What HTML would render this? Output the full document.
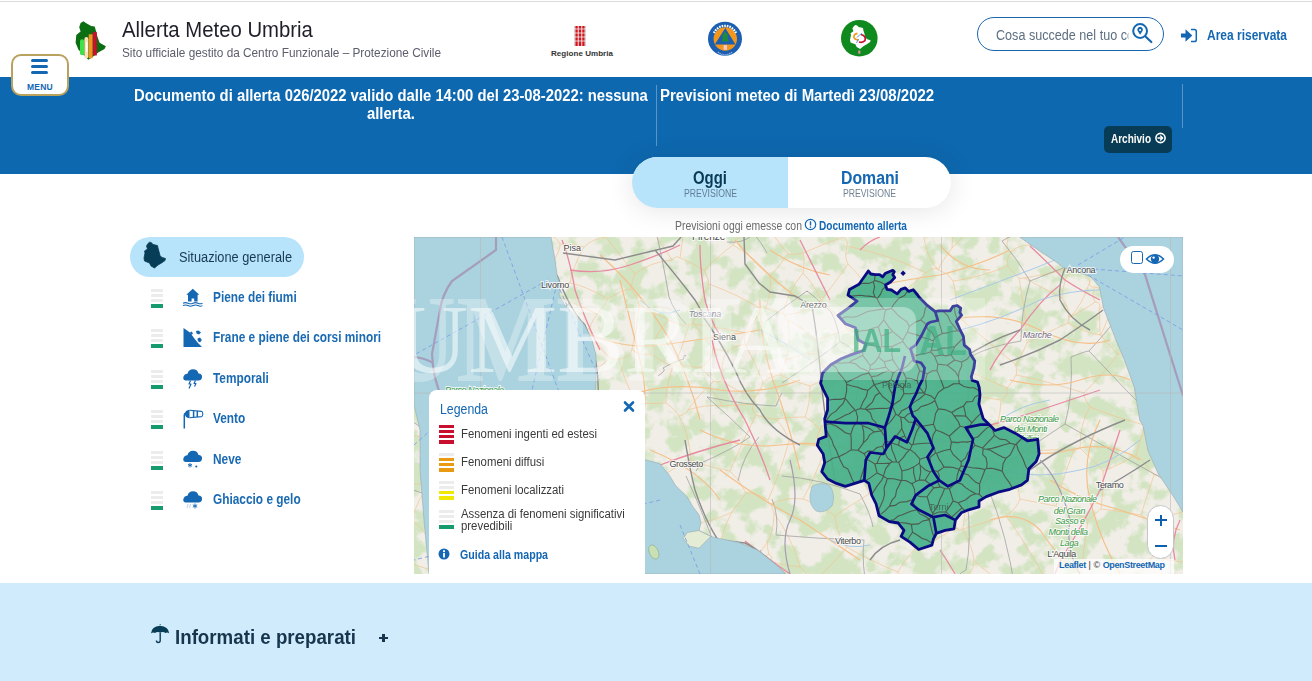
<!DOCTYPE html>
<html><head><meta charset="utf-8">
<style>
*{margin:0;padding:0;box-sizing:border-box}
html,body{width:1312px;height:681px;overflow:hidden;background:#fff;font-family:"Liberation Sans",sans-serif}
.a{position:absolute;white-space:nowrap;line-height:1}
#topline{position:absolute;left:0;top:1px;width:1312px;height:1px;background:#dadcda}
#band{position:absolute;left:0;top:77px;width:1312px;height:97px;background:#0e68af}
#bottom{position:absolute;left:0;top:583px;width:1312px;height:98px;background:#d0ecfc}
.bt{color:#fff;font-weight:700;font-size:16px;transform:scaleX(0.926);transform-origin:0 0}
.lvl{position:absolute;left:151px;width:12px}
.lvl i{display:block;height:3px;margin-bottom:2px;background:#ececec}
.lvl i.g{background:#169b6f;height:4px}
.side{position:absolute;left:213px;font-size:14px;font-weight:700;color:#1a6ab3;transform:scaleX(0.847);transform-origin:0 0;white-space:nowrap;line-height:1}
.ico{position:absolute;left:182px}
</style></head><body>
<div id="topline"></div>
<div id="band"></div>
<div id="bottom"></div>

<!-- ================= HEADER ================= -->
<div class="a" id="title" style="left:122px;top:19px;font-size:22px;transform:scaleX(0.924);transform-origin:0 0;color:#1f1f2a">Allerta Meteo Umbria</div>
<div class="a" id="subtitle" style="left:122px;top:46px;font-size:13px;transform:scaleX(0.907);transform-origin:0 0;color:#5d5d6d">Sito ufficiale gestito da Centro Funzionale – Protezione Civile</div>


<!-- logo -->
<svg class="a" style="left:70px;top:16px" width="42" height="48" viewBox="70 16 42 48">
<path d="M83.4 21.3 L85.5 22.7 L91.1 25.9 L94.7 26.6 L96.1 31.5 L97.5 37.1 L99.6 42.8 L105.9 46.3 L104.5 49.1 L98.2 52.6 L92.6 56.9 L88.3 59.7 L84.1 55.5 L78.5 49.8 L75.6 42.8 L76.3 35 L80.6 31.5 L79.2 27.3 L80.6 23 Z" fill="#0b6e12"/>
<rect x="80" y="39.3" width="4.2" height="16" rx="2" fill="#3fe04a"/>
<rect x="84.4" y="37.1" width="4" height="21.5" rx="2" fill="#fbe3b8"/>
<rect x="86" y="42" width="1.6" height="10" rx="0.8" fill="#fffdf4"/>
<rect x="88.7" y="34.3" width="3.9" height="24" fill="#f0961e"/>
<rect x="92.9" y="31.9" width="3.9" height="23.6" fill="#c8102e"/>
</svg>
<!-- menu button -->
<div class="a" style="left:11px;top:54px;width:58px;height:42px;border:2px solid #b9a15e;border-radius:10px;background:#fff"></div>
<div class="a" style="left:31px;top:59px;width:17px;height:3px;border-radius:1.5px;background:#1467b3"></div>
<div class="a" style="left:31px;top:65px;width:17px;height:3px;border-radius:1.5px;background:#1467b3"></div>
<div class="a" style="left:31px;top:71px;width:17px;height:3px;border-radius:1.5px;background:#1467b3"></div>
<div class="a" style="left:27px;top:83px;font-size:8.5px;font-weight:700;color:#1467b3;letter-spacing:0.2px">MENU</div>

<!-- regione umbria -->
<svg class="a" style="left:572px;top:25px" width="16" height="22" viewBox="0 0 16 22">
<rect x="2" y="1" width="12" height="20" fill="#cfcfcf"/>
<rect x="3.5" y="1" width="2.2" height="20" fill="#e0101a"/>
<rect x="6.9" y="1" width="2.2" height="20" fill="#e0101a"/>
<rect x="10.3" y="1" width="2.2" height="20" fill="#e0101a"/>
<path d="M2 4h12M2 8h12M2 12h12M2 16h12" stroke="#f2f2f2" stroke-width="0.8"/>
</svg>
<div class="a" style="left:551px;top:50px;font-size:8px;font-weight:700;color:#333;letter-spacing:0.05px">Regione Umbria</div>

<!-- protezione civile -->
<svg class="a" style="left:706px;top:20px" width="38" height="38" viewBox="706 20 38 38">
<circle cx="725" cy="38.8" r="17" fill="#1c5fb0"/>
<circle cx="725.3" cy="39" r="11.7" fill="#f2971c"/>
<path d="M725.3 27.9 L735.5 44.5 L714.8 44.5 Z" fill="#1c5fb0"/>
<path d="M725 31.5 L728 35 L727.5 38 L729 41.5 L721.5 41.5 L722.8 38 L722.3 35 Z" fill="#1f8a3a"/>
<rect x="723.6" y="45.1" width="3.4" height="4.7" fill="#f0c8d0"/>
<path d="M714 33 A12 12 0 0 1 736 33" fill="none" stroke="#fff" stroke-width="2.2" stroke-dasharray="1.6 1"/>
<path d="M718 52 A10 10 0 0 0 732 52" fill="none" stroke="#9ec0ea" stroke-width="1.4" stroke-dasharray="1.2 0.8"/>
</svg>

<!-- green circle -->
<svg class="a" style="left:839px;top:18px" width="40" height="40" viewBox="839 18 40 40">
<circle cx="859.3" cy="38.2" r="18.3" fill="#0f8a1f"/>
<path d="M855.3 25.0 L857.2 25.5 L858.6 27.1 L863.0 28.1 L863.4 30.4 L864.4 33.6 L865.4 37.4 L867.3 39.2 L870.6 40.2 L870.2 42.0 L866.8 44.3 L863.4 46.2 L860.1 49.0 L856.7 47.1 L855.3 44.3 L850.5 42.5 L850.0 39.7 L851.0 35.0 L850.5 33.2 L853.4 31.3 L852.4 28.5 L853.8 26.2 Z" fill="#fff"/>
<path d="M857.5 33.5 Q853.5 34 854 37.5 Q855 40 858.5 40" fill="none" stroke="#f39a1a" stroke-width="1.8"/>
<path d="M861 34.5 Q866.5 36 865 40.5 Q863 43 859 42" fill="none" stroke="#c8102e" stroke-width="1.8"/>
<path d="M857 37.5 Q860 34 862 33.5 M858.5 39 Q857 42 856.5 43" fill="none" stroke="#3a8ad8" stroke-width="0.9"/>
<rect x="858.2" y="50.5" width="2.2" height="3.2" fill="#e090a0"/>
</svg>

<!-- search -->
<div class="a" style="left:977px;top:17px;width:187px;height:34px;border:1.3px solid #1a67b0;border-radius:17px;background:#fff"></div>
<div class="a" style="left:996px;top:28px;width:147px;overflow:hidden;font-size:14px;color:#5d6f80;transform:scaleX(0.9);transform-origin:0 0">Cosa succede nel tuo comune</div>
<svg class="a" style="left:1128px;top:20px" width="28" height="26" viewBox="1128 20 28 26">
<circle cx="1140.1" cy="31" r="6.9" fill="none" stroke="#1467b3" stroke-width="2"/>
<path d="M1145.5 36.5 L1151.3 42" stroke="#1467b3" stroke-width="2.2" stroke-linecap="round"/>
<path d="M1140.1 34.8 L1137.7 31 A2.8 2.8 0 1 1 1142.5 31 Z" fill="#1467b3"/>
<circle cx="1140.1" cy="30" r="1" fill="#fff"/>
</svg>

<!-- area riservata -->
<svg class="a" style="left:1178px;top:26px" width="22" height="18" viewBox="1178 26 22 18">
<path d="M1181 35.5 L1186.5 35.5" stroke="#1467b3" stroke-width="4"/>
<path d="M1185.5 29.2 L1192.3 35.5 L1185.5 41.8 Z" fill="#1467b3"/>
<path d="M1191 29.6 L1194.5 29.6 Q1196.3 29.6 1196.3 31.4 L1196.3 39.8 Q1196.3 41.6 1194.5 41.6 L1191 41.6" fill="none" stroke="#1467b3" stroke-width="1.5"/>
</svg>
<div class="a" style="left:1207px;top:28px;font-size:14px;font-weight:700;color:#1467b3;transform:scaleX(0.856);transform-origin:0 0">Area riservata</div>


<!-- band text -->
<div class="a bt" style="left:134px;top:88px">Documento di allerta 026/2022 valido dalle 14:00 del 23-08-2022: nessuna</div>
<div class="a bt" style="left:367px;top:106px">allerta.</div>
<div class="a" style="left:656px;top:85px;width:1px;height:61px;background:#5b95c8"></div>
<div class="a bt" style="left:660px;top:88px;transform:scaleX(0.937);transform-origin:0 0">Previsioni meteo di Martedì 23/08/2022</div>
<div class="a" style="left:1182px;top:84px;width:1px;height:44px;background:#5b95c8"></div>
<div class="a" style="left:1104px;top:126px;width:68px;height:27px;background:#083c56;border-radius:5px"></div>
<div class="a" style="left:1111px;top:133px;font-size:12px;font-weight:700;color:#fff;transform:scaleX(0.833);transform-origin:0 0">Archivio</div>

<!-- tabs -->
<div class="a" style="left:632px;top:157px;width:319px;height:51px;border-radius:25.5px;background:#fff;box-shadow:0 2px 28px rgba(0,0,0,0.11);overflow:hidden">
  <div style="position:absolute;left:0;top:0;width:156px;height:51px;background:#b8e4fb"></div>
</div>
<div class="a" style="left:693px;top:169px;font-size:18px;font-weight:700;color:#083a55;transform:scaleX(0.829);transform-origin:0 0">Oggi</div>
<div class="a" style="left:684px;top:189px;font-size:10px;color:#5f7d94;transform:scaleX(0.867);transform-origin:0 0">PREVISIONE</div>
<div class="a" style="left:841px;top:169px;font-size:18px;font-weight:700;color:#1467b3;transform:scaleX(0.879);transform-origin:0 0">Domani</div>
<div class="a" style="left:843px;top:189px;font-size:10px;color:#6f8193;transform:scaleX(0.867);transform-origin:0 0">PREVISIONE</div>

<div class="a" style="left:675px;top:220px;font-size:12px;color:#6b6b6b;transform:scaleX(0.869);transform-origin:0 0">Previsioni oggi emesse con</div>
<div class="a" style="left:819px;top:220px;font-size:12px;font-weight:700;color:#1467b3;transform:scaleX(0.84);transform-origin:0 0">Documento allerta</div>

<!-- sidebar -->
<div class="a" style="left:130px;top:237px;width:174px;height:40px;border-radius:20px;background:#b8e4fb"></div>
<div class="a" style="left:179px;top:250px;font-size:14px;color:#173a52;transform:scaleX(0.913);transform-origin:0 0">Situazione generale</div>

<div class="lvl" style="top:289px"><i></i><i></i><i></i><i class="g"></i></div>
<div class="side" style="top:290px">Piene dei fiumi</div>
<div class="lvl" style="top:329px"><i></i><i></i><i></i><i class="g"></i></div>
<div class="side" style="top:330px">Frane e piene dei corsi minori</div>
<div class="lvl" style="top:370px"><i></i><i></i><i></i><i class="g"></i></div>
<div class="side" style="top:371px">Temporali</div>
<div class="lvl" style="top:410px"><i></i><i></i><i></i><i class="g"></i></div>
<div class="side" style="top:411px">Vento</div>
<div class="lvl" style="top:451px"><i></i><i></i><i></i><i class="g"></i></div>
<div class="side" style="top:452px">Neve</div>
<div class="lvl" style="top:491px"><i></i><i></i><i></i><i class="g"></i></div>
<div class="side" style="top:492px">Ghiaccio e gelo</div>

<!-- map -->
<svg class="a" style="left:414px;top:237px" width="769" height="337" viewBox="414 237 769 337">
<defs><filter id="bl" x="-20%" y="-20%" width="140%" height="140%"><feGaussianBlur stdDeviation="1.2"/></filter></defs>
<rect x="414" y="237" width="769" height="337" fill="#f1eee8"/>
<filter id="forest" color-interpolation-filters="sRGB" x="414" y="237" width="769" height="337" filterUnits="userSpaceOnUse"><feTurbulence type="fractalNoise" baseFrequency="0.045" numOctaves="4" seed="11" result="n"/><feColorMatrix in="n" type="matrix" values="0 0 0 0 0.80  0 0 0 0 0.885  0 0 0 0 0.73  7 0 0 0 -3.1" /><feComponentTransfer><feFuncA type="linear" slope="0.8" intercept="0"/></feComponentTransfer></filter>
<rect x="414" y="237" width="769" height="337" fill="#fff" filter="url(#forest)"/>
<path d="M469 1218 Q452 904 439 581 M-240 430 Q49 369 336 314 M408 258 Q374 291 336 314 M439 581 Q443 584 439 580 M-240 430 Q-118 436 6 441 M6 441 Q221 502 434 571 M439 580 Q439 576 434 571 M422 437 Q390 432 357 422 M422 437 Q422 417 430 402 M357 422 Q395 406 423 393 M430 402 Q424 393 423 393 M502 395 Q478 426 458 455 M502 395 Q492 384 491 377 M491 377 Q467 382 447 394 M447 394 Q447 406 441 408 M441 408 Q444 424 438 442 M438 442 Q444 447 458 455 M430 402 Q436 404 441 408 M423 393 Q429 393 430 387 M430 387 Q443 391 447 394 M422 437 Q427 444 438 442 M927 1552 Q916 1108 898 672 M927 1552 Q865 1068 810 580 M898 672 Q862 629 819 577 M810 580 Q810 576 819 577 M547 555 Q556 567 568 579 M547 555 Q523 553 494 551 M494 551 Q490 552 486 558 M486 558 Q519 609 550 659 M550 659 Q563 616 568 579 M469 1218 Q505 937 550 659 M439 580 Q461 569 486 558 M848 264 Q844 257 847 246 M848 264 Q868 283 881 312 M847 246 Q891 255 926 273 M881 312 Q902 292 926 273 M1348 304 Q1276 310 1205 321 M1348 304 Q1259 267 1165 224 M1205 321 Q1193 314 1188 315 M1188 315 Q1177 266 1165 224 M854 179 Q894 212 924 237 M854 179 Q852 207 844 237 M844 237 Q848 240 847 246 M926 273 Q931 267 937 269 M924 237 Q926 255 937 269 M463 473 Q444 483 431 483 M463 473 Q466 477 468 480 M468 480 Q455 510 433 544 M431 483 Q417 499 412 520 M412 520 Q422 528 433 544 M366 490 Q260 466 159 437 M366 490 Q397 485 431 483 M159 437 Q221 428 288 418 M357 422 Q328 417 288 418 M458 455 Q464 467 463 473 M485 487 Q477 484 468 480 M485 487 Q490 515 494 551 M434 571 Q434 562 433 544 M366 490 Q391 505 412 520 M6 441 Q82 443 159 437 M484 347 Q468 340 462 339 M484 347 Q492 364 491 377 M430 387 Q433 369 429 349 M462 339 Q441 345 429 349 M389 366 Q340 388 288 418 M389 366 Q407 362 425 349 M425 349 Q422 345 429 349 M1193 353 Q1166 365 1146 373 M1193 353 Q1194 368 1188 390 M1188 390 Q1170 379 1146 373 M1249 451 Q1225 439 1200 423 M1205 321 Q1195 337 1193 353 M1200 423 Q1197 405 1188 390 M1200 423 Q1175 424 1145 426 M1143 373 Q1149 372 1146 373 M1143 373 Q1147 395 1144 425 M1144 425 Q1143 422 1145 426 M1190 510 Q1169 515 1149 522 M1190 510 Q1194 534 1203 561 M1203 561 Q1198 562 1189 563 M1189 563 Q1169 561 1153 556 M1153 556 Q1153 538 1149 522 M1249 451 Q1233 458 1218 472 M1218 472 Q1207 490 1190 510 M1186 2476 Q1139 1617 1095 749 M1095 749 Q1140 653 1189 563 M1095 749 Q1089 694 1085 639 M1085 639 Q1120 596 1153 556 M1101 509 Q1104 485 1103 471 M1101 509 Q1126 512 1141 515 M1141 515 Q1147 495 1154 475 M1103 471 Q1117 466 1136 455 M1136 455 Q1144 461 1154 475 M1085 639 Q1079 629 1077 619 M1077 619 Q1081 566 1088 520 M1088 520 Q1098 511 1101 509 M1149 522 Q1148 518 1141 515 M1218 472 Q1186 475 1154 475 M1144 425 Q1112 416 1090 407 M1145 426 Q1140 440 1136 455 M1080 448 Q1080 423 1090 407 M1080 448 Q1092 459 1103 471 M748 618 Q725 732 706 853 M748 618 Q757 609 769 598 M810 580 Q813 583 810 580 M769 598 Q784 587 810 580 M687 577 Q686 574 686 564 M687 577 Q679 613 669 643 M651 609 Q659 577 664 554 M651 609 Q665 627 669 643 M664 554 Q676 556 686 564 M748 618 Q748 613 739 598 M706 853 Q686 748 669 643 M739 598 Q709 590 687 577 M604 561 Q587 567 568 579 M604 561 Q631 586 651 609 M680 258 Q686 224 683 184 M680 258 Q688 261 704 270 M704 270 Q722 253 733 245 M683 184 Q708 212 740 232 M733 245 Q740 236 740 232 M672 260 Q640 211 612 171 M672 260 Q650 262 635 274 M635 274 Q621 257 606 237 M606 237 Q604 212 609 180 M609 180 Q610 177 612 171 M643 44 Q664 111 683 184 M643 44 Q630 107 612 171 M680 258 Q676 255 672 260 M939 445 Q946 444 958 443 M939 445 Q929 415 915 387 M980 434 Q970 441 958 443 M980 434 Q988 425 997 425 M997 425 Q1000 417 1001 400 M915 387 Q953 393 1001 400 M847 547 Q835 562 819 577 M847 547 Q868 560 898 572 M898 672 Q896 649 902 634 M898 572 Q899 594 903 623 M902 634 Q903 633 903 623 M915 549 Q932 543 955 528 M915 549 Q899 526 885 495 M955 528 Q935 502 916 471 M885 495 Q904 486 916 471 M835 516 Q837 536 847 547 M835 516 Q848 507 869 494 M869 494 Q872 493 885 495 M898 572 Q903 562 915 549 M939 445 Q932 449 928 452 M958 443 Q954 484 956 528 M956 528 Q960 529 955 528 M928 452 Q922 463 916 469 M916 469 Q921 468 916 471 M869 494 Q861 470 862 452 M862 452 Q862 447 870 444 M916 469 Q895 459 870 444 M980 434 Q968 478 963 529 M956 528 Q958 532 963 529 M963 529 Q963 529 963 529 M1143 373 Q1132 363 1126 353 M1188 315 Q1181 314 1172 317 M1126 353 Q1136 346 1144 334 M1172 317 Q1157 325 1144 334 M1017 453 Q1042 449 1074 450 M1017 453 Q1014 472 1020 499 M1074 450 Q1061 482 1056 506 M1020 499 Q1040 503 1056 506 M997 425 Q1010 436 1017 453 M1006 516 Q983 523 963 529 M1006 516 Q1017 508 1020 499 M1088 520 Q1068 509 1056 506 M1080 448 Q1072 452 1074 450 M1077 619 Q1070 607 1056 601 M1006 516 Q1034 554 1056 601 M956 315 Q958 300 953 281 M956 315 Q986 340 1016 365 M953 281 Q978 278 1008 266 M1008 266 Q1011 270 1019 278 M1019 278 Q1026 311 1027 343 M1027 343 Q1022 355 1016 365 M1090 407 Q1083 396 1084 393 M1007 388 Q1009 396 1001 400 M1007 388 Q1013 382 1016 375 M1016 375 Q1047 381 1084 393 M956 315 Q939 327 920 349 M920 349 Q959 367 1007 388 M1016 375 Q1017 374 1016 365 M1126 353 Q1121 352 1118 354 M1084 393 Q1105 372 1118 354 M1062 298 Q1043 288 1024 278 M1062 298 Q1063 279 1072 268 M1072 268 Q1043 275 1024 278 M1019 278 Q1020 279 1024 278 M1069 319 Q1068 321 1068 323 M1069 319 Q1069 307 1062 298 M1027 343 Q1044 334 1068 323 M437 268 Q437 288 447 307 M437 268 Q428 267 422 268 M447 307 Q427 314 403 315 M422 268 Q413 290 394 306 M394 306 Q399 312 397 309 M397 309 Q399 310 403 315 M484 347 Q490 335 505 325 M462 339 Q450 320 447 307 M505 325 Q486 284 468 244 M468 244 Q455 256 437 268 M484 207 Q487 207 485 216 M408 258 Q417 266 422 268 M485 216 Q472 228 468 244 M425 349 Q415 328 403 315 M336 314 Q368 315 394 306 M389 366 Q396 339 397 309 M550 408 Q550 414 544 411 M550 408 Q588 435 617 465 M544 411 Q543 437 540 471 M617 465 Q623 469 621 482 M621 482 Q579 477 540 471 M485 487 Q505 484 530 483 M547 555 Q544 540 545 521 M545 521 Q538 505 530 483 M502 395 Q524 405 544 411 M530 483 Q530 479 540 471 M774 513 Q791 536 800 567 M774 513 Q774 530 768 541 M800 567 Q781 565 770 561 M768 541 Q766 547 769 554 M770 561 Q774 558 769 554 M769 598 Q769 582 770 561 M810 580 Q804 570 800 567 M733 575 Q739 575 735 581 M733 575 Q755 563 768 541 M735 581 Q752 564 769 554 M739 598 Q736 590 735 581 M816 340 Q819 352 816 354 M816 340 Q799 325 788 320 M816 354 Q806 352 786 360 M788 320 Q791 344 786 360 M623 538 Q627 514 623 493 M623 538 Q638 545 660 550 M660 550 Q670 540 682 525 M682 525 Q668 500 661 477 M661 477 Q647 482 624 485 M623 493 Q628 492 624 485 M604 561 Q610 551 623 538 M545 521 Q581 503 623 493 M664 554 Q663 547 660 550 M621 482 Q618 483 624 485 M718 551 Q706 555 700 556 M718 551 Q723 529 732 512 M700 556 Q694 541 687 525 M732 512 Q713 522 687 525 M733 575 Q730 559 718 551 M686 564 Q688 563 700 556 M682 525 Q683 520 687 525 M691 460 Q676 466 661 477 M691 460 Q708 467 730 471 M746 493 Q740 480 730 471 M746 493 Q741 500 732 512 M709 284 Q739 295 761 309 M709 284 Q701 300 693 323 M693 323 Q693 322 694 324 M761 309 Q757 318 747 333 M694 324 Q721 328 747 333 M722 406 Q720 398 708 387 M722 406 Q706 404 688 410 M708 387 Q694 400 688 410 M691 460 Q689 433 679 416 M756 415 Q742 442 730 471 M756 415 Q750 411 754 404 M754 404 Q738 405 722 406 M688 410 Q687 414 679 416 M617 465 Q618 443 623 413 M666 403 Q677 411 679 416 M666 403 Q647 404 636 403 M623 413 Q625 405 636 403 M968 576 Q968 584 970 593 M968 576 Q974 569 974 561 M974 561 Q987 571 998 581 M998 581 Q990 588 978 601 M978 601 Q978 600 970 593 M902 634 Q940 618 970 593 M903 623 Q938 597 968 576 M963 529 Q973 548 974 561 M1056 601 Q1026 587 998 581 M1186 2476 Q1087 1536 978 601 M833 40 Q793 130 760 219 M760 219 Q754 223 740 232 M567 207 Q523 210 484 207 M567 207 Q588 194 609 180 M1145 18 Q1213 -1249 1279 -2523 M1145 18 Q1155 116 1160 218 M1160 218 Q1161 226 1165 224 M1145 18 Q1117 111 1081 203 M1050 221 Q1062 219 1077 208 M1050 221 Q1036 212 1026 203 M1026 203 Q1153 -1157 1279 -2523 M1081 203 Q1081 207 1077 208 M1029 245 Q1036 237 1049 231 M1029 245 Q1052 249 1069 250 M1049 231 Q1062 232 1067 241 M1069 250 Q1073 245 1067 241 M1011 252 Q1018 245 1029 245 M1011 252 Q1005 250 1008 238 M1050 221 Q1052 231 1049 231 M1008 238 Q1020 220 1026 203 M1008 266 Q1006 259 1011 252 M1075 266 Q1071 257 1072 254 M1075 266 Q1074 267 1072 268 M1072 254 Q1075 255 1069 250 M1077 208 Q1067 221 1067 241 M1072 254 Q1082 245 1091 232 M1091 232 Q1091 218 1081 203 M540 322 Q555 322 571 332 M540 322 Q549 365 559 400 M571 332 Q566 361 570 390 M570 390 Q572 398 565 397 M559 400 Q557 397 565 397 M530 315 Q530 313 536 302 M530 315 Q538 316 540 322 M597 314 Q591 323 589 329 M597 314 Q568 300 549 293 M589 329 Q583 329 571 332 M549 293 Q539 302 536 302 M550 408 Q557 408 559 400 M505 325 Q520 320 530 315 M589 329 Q596 345 610 358 M610 358 Q590 376 570 390 M623 413 Q596 408 565 397 M636 403 Q623 377 619 359 M619 359 Q618 360 610 358 M631 289 Q623 289 608 299 M631 289 Q633 276 635 274 M608 299 Q586 286 570 283 M606 237 Q592 239 584 247 M570 283 Q573 266 584 247 M608 299 Q603 308 597 314 M549 293 Q555 289 552 290 M570 283 Q559 284 552 290 M816 354 Q825 368 829 378 M786 360 Q785 365 780 375 M780 375 Q791 380 810 386 M829 378 Q824 380 810 386 M756 415 Q768 419 775 419 M755 397 Q753 402 754 404 M755 397 Q763 386 763 382 M763 382 Q769 377 780 375 M775 419 Q787 417 805 417 M810 386 Q810 405 805 417 M709 284 Q708 277 704 270 M733 245 Q756 258 770 276 M761 309 Q766 307 766 308 M766 308 Q772 289 770 276 M760 219 Q772 233 788 254 M770 276 Q779 267 788 254 M854 179 Q841 113 833 40 M844 237 Q826 243 803 253 M803 253 Q796 255 788 254 M789 441 Q801 445 820 446 M789 441 Q780 474 768 500 M803 499 Q786 497 773 503 M803 499 Q814 480 823 455 M823 455 Q818 447 820 446 M773 503 Q767 506 768 500 M775 419 Q784 426 789 441 M805 417 Q816 423 820 431 M820 431 Q815 434 820 446 M746 493 Q755 492 768 500 M835 516 Q816 503 803 499 M774 513 Q770 504 773 503 M862 452 Q842 456 823 455 M632 349 Q638 327 639 305 M632 349 Q637 356 651 354 M651 354 Q655 332 669 320 M639 305 Q656 314 669 320 M631 289 Q637 295 639 305 M619 359 Q630 358 632 349 M666 403 Q665 389 673 366 M673 366 Q665 364 651 354 M689 325 Q682 348 675 365 M689 325 Q683 327 669 320 M673 366 Q672 362 675 365 M693 323 Q692 324 689 325 M726 352 Q723 350 713 349 M726 352 Q720 365 722 380 M713 349 Q712 360 701 368 M701 368 Q704 371 713 380 M722 380 Q716 384 713 380 M694 324 Q704 335 713 349 M745 344 Q743 336 747 333 M745 344 Q736 345 726 352 M755 397 Q734 391 722 380 M763 382 Q756 364 745 344 M675 365 Q686 365 701 368 M708 387 Q715 381 713 380 M1075 266 Q1080 264 1087 270 M1069 319 Q1068 314 1070 317 M1070 317 Q1083 304 1090 281 M1087 270 Q1084 274 1090 281 M560 244 Q561 249 553 262 M560 244 Q557 236 548 236 M553 262 Q535 262 519 257 M548 236 Q529 235 504 229 M504 229 Q509 243 519 257 M552 290 Q549 281 553 262 M584 247 Q575 244 560 244 M567 207 Q557 222 548 236 M536 302 Q526 278 519 257 M485 216 Q498 219 504 229 M848 330 Q867 335 877 339 M848 330 Q832 335 816 340 M877 339 Q877 349 887 363 M829 378 Q835 375 843 380 M843 380 Q860 367 887 363 M920 349 Q905 351 888 364 M915 387 Q907 380 891 372 M891 372 Q892 363 888 364 M928 452 Q906 429 884 413 M891 372 Q892 391 884 413 M881 312 Q876 325 877 339 M937 269 Q936 266 938 270 M938 270 Q948 273 953 281 M888 364 Q892 366 887 363 M785 315 Q788 317 783 314 M785 315 Q807 313 821 301 M783 314 Q788 291 803 273 M803 273 Q816 287 821 300 M821 301 Q825 300 821 300 M788 320 Q785 321 785 315 M766 308 Q772 310 783 314 M848 330 Q838 314 821 301 M803 253 Q805 260 803 273 M848 264 Q832 287 821 300 M1144 334 Q1128 312 1118 297 M1118 354 Q1104 340 1101 335 M1118 297 Q1108 317 1101 335 M1068 323 Q1088 334 1100 335 M1101 335 Q1099 335 1100 335 M1134 281 Q1129 284 1126 288 M1134 281 Q1137 263 1133 247 M1126 288 Q1110 282 1089 269 M1133 247 Q1124 248 1117 251 M1117 251 Q1099 262 1089 269 M1172 317 Q1156 300 1134 281 M1118 297 Q1116 299 1118 296 M1118 296 Q1119 295 1126 288 M1160 218 Q1151 231 1133 247 M1091 232 Q1105 241 1117 251 M1087 270 Q1086 273 1089 269 M977 222 Q966 219 959 211 M977 222 Q981 218 979 222 M979 222 Q986 192 985 164 M959 211 Q954 205 951 200 M951 200 Q942 -562 936 -1322 M936 -1322 Q963 -581 985 164 M952 248 Q952 232 959 211 M952 248 Q964 235 977 222 M938 270 Q942 261 952 248 M1008 238 Q1005 236 998 231 M998 231 Q993 222 979 222 M998 231 Q992 193 985 164 M924 237 Q936 220 951 200 M828 424 Q836 416 837 412 M828 424 Q853 434 871 436 M837 412 Q859 420 873 429 M871 436 Q873 432 873 429 M820 431 Q820 425 828 424 M843 380 Q843 393 837 412 M870 444 Q870 442 871 436 M884 413 Q878 422 873 429 M1095 287 Q1104 288 1112 295 M1095 287 Q1091 295 1095 302 M1112 295 Q1107 303 1099 310 M1095 302 Q1102 302 1099 310 M1090 281 Q1088 288 1095 287 M1118 296 Q1119 301 1112 295 M1070 317 Q1087 308 1095 302 M1100 335 Q1100 323 1099 310" fill="none" stroke="#f2c590" stroke-width="0.9" opacity="0.75"/>
<path d="M1015 589 Q1007 536 989 490 M754 234 Q743 244 727 242 M754 234 Q810 60 868 -125 M613 188 Q631 211 655 227 M720 561 Q708 524 686 476 M895 405 Q917 384 931 351 M856 401 Q860 378 857 357 M954 586 Q910 596 868 596 M954 586 Q844 1452 737 2325 M868 596 Q829 830 787 1063 M737 2325 Q759 1699 787 1063 M966 570 Q972 538 967 500 M966 570 Q956 574 954 586 M864 540 Q861 563 868 596 M742 572 Q760 821 787 1063 M742 572 Q752 565 761 550 M776 535 Q820 539 864 540 M720 561 Q729 571 742 572 M967 500 Q975 488 982 486 M989 490 Q993 492 987 488 M917 435 Q909 423 895 405 M917 435 Q946 440 968 448 M968 448 Q968 401 968 358 M952 346 Q963 352 968 358 M868 -125 Q888 6 904 135 M1164 162 Q1082 196 1002 241 M857 357 Q851 345 840 342 M840 342 Q838 325 831 312 M831 312 Q814 296 807 291 M586 509 Q580 498 583 483 M583 483 Q601 451 610 416 M776 535 Q779 516 772 499 M860 494 Q821 479 782 476 M860 494 Q871 515 873 527 M982 483 Q987 479 982 486 M968 358 Q989 346 1021 341 M1002 241 Q1018 260 1030 281 M1030 281 Q1021 312 1021 341 M1164 162 Q1153 198 1133 244 M1030 281 Q1079 261 1133 244 M1065 424 Q1114 452 1167 481 M1065 424 Q1073 395 1071 357 M1071 357 Q1086 351 1089 351 M1089 351 Q1163 431 1248 505 M1167 481 Q1210 495 1248 505 M982 483 Q1020 453 1065 424 M1130 301 Q1113 325 1089 351 M655 227 Q664 266 669 297 M669 297 Q675 313 686 324 M840 342 Q813 363 782 383 M570 302 Q563 309 562 315 M663 368 Q675 361 684 359 M684 359 Q683 354 686 356 M782 393 Q779 398 776 406 M807 291 Q788 304 766 321 M754 234 Q761 242 767 253 M807 291 Q808 293 807 291 M476 510 Q310 458 156 405 M463 458 Q402 413 350 378 M156 405 Q252 394 350 378 M528 599 Q501 556 476 510 M350 378 Q348 375 350 378 M350 378 Q403 327 455 281 M576 45 Q524 159 475 281 M463 458 Q465 457 472 446 M776 406 Q747 405 707 397 M539 332 Q533 324 539 327 M539 327 Q532 327 536 326 M472 446 Q486 430 505 402 M559 450 Q542 420 519 395 M610 416 Q573 370 539 332 M658 376 Q667 370 663 368 M759 437 Q743 455 738 481 M750 437 Q731 450 701 463 M701 463 Q702 463 696 471 M707 397 Q731 418 750 437" fill="none" stroke="#9a9a9a" stroke-width="0.9" opacity="0.8"/>
<path d="M600 255 Q640 290 670 340 Q690 380 700 420" fill="none" stroke="#f5c089" stroke-width="1.2"/>
<path d="M580 330 Q620 350 660 345 Q700 340 760 330" fill="none" stroke="#f5c089" stroke-width="1.2"/>
<path d="M620 400 Q660 380 720 390 Q760 395 800 380" fill="none" stroke="#f5c089" stroke-width="1.2"/>
<path d="M700 430 Q740 450 780 445 Q820 440 850 450" fill="none" stroke="#f5c089" stroke-width="1.2"/>
<path d="M720 470 Q760 500 800 520 Q830 540 860 560" fill="none" stroke="#f5c089" stroke-width="1.2"/>
<path d="M650 450 Q700 470 720 500" fill="none" stroke="#f5c089" stroke-width="1.2"/>
<path d="M770 250 Q800 270 830 275" fill="none" stroke="#f5c089" stroke-width="1.2"/>
<path d="M860 290 Q900 280 940 275 Q980 265 1010 250" fill="none" stroke="#f5c089" stroke-width="1.2"/>
<path d="M950 320 Q1000 310 1040 330 Q1080 350 1110 340" fill="none" stroke="#f5c089" stroke-width="1.2"/>
<path d="M1000 440 Q1030 460 1070 450 Q1110 440 1140 460" fill="none" stroke="#f5c089" stroke-width="1.2"/>
<path d="M1050 480 Q1080 500 1120 510 Q1150 520 1180 530" fill="none" stroke="#f5c089" stroke-width="1.2"/>
<path d="M990 520 Q1020 510 1040 530 Q1060 560 1080 574" fill="none" stroke="#f5c089" stroke-width="1.2"/>
<path d="M620 280 Q630 320 640 360 Q650 400 640 430" fill="none" stroke="#f5c089" stroke-width="1.2"/>
<path d="M760 300 Q760 350 780 400 Q790 430 800 470" fill="none" stroke="#f5c089" stroke-width="1.2"/>
<path d="M1010 380 Q1050 390 1080 380 Q1110 370 1130 380" fill="none" stroke="#f5c089" stroke-width="1.2"/>
<path d="M940 245 Q960 270 990 270" fill="none" stroke="#f5c089" stroke-width="1.2"/>
<path d="M735 240 Q760 270 800 300" fill="none" stroke="#f5c089" stroke-width="1.2"/>
<path d="M1100 420 Q1080 460 1090 500 Q1100 540 1120 574" fill="none" stroke="#f5c089" stroke-width="1.2"/>
<path d="M562 240 Q570 260 575 290 Q585 320 600 350" fill="none" stroke="#e88aa0" stroke-width="1.3"/>
<path d="M570 270 Q600 275 630 265 Q660 255 680 245" fill="none" stroke="#e88aa0" stroke-width="1.3"/>
<path d="M700 245 Q700 270 705 300 Q710 320 720 335" fill="none" stroke="#e88aa0" stroke-width="1.3"/>
<path d="M712 340 Q720 380 745 420 Q760 450 770 480" fill="none" stroke="#e88aa0" stroke-width="1.3"/>
<path d="M660 465 Q700 450 740 440" fill="none" stroke="#e88aa0" stroke-width="1.3"/>
<path d="M745 541 Q770 560 790 574" fill="none" stroke="#e88aa0" stroke-width="1.3"/>
<path d="M860 250 Q870 240 880 237" fill="none" stroke="#e88aa0" stroke-width="1.3"/>
<path d="M1030 246 Q1050 265 1065 280 Q1080 290 1100 300" fill="none" stroke="#e88aa0" stroke-width="1.3"/>
<path d="M1060 285 Q1040 300 1020 330 Q1000 350 990 370" fill="none" stroke="#e88aa0" stroke-width="1.3"/>
<path d="M1100 390 Q1070 400 1040 410 Q1010 420 990 425" fill="none" stroke="#e88aa0" stroke-width="1.3"/>
<path d="M1120 430 Q1110 460 1100 490 Q1085 520 1070 545 Q1060 560 1055 574" fill="none" stroke="#e88aa0" stroke-width="1.3"/>
<path d="M1180 520 Q1170 540 1175 560" fill="none" stroke="#e88aa0" stroke-width="1.3"/>
<path d="M940 550 Q950 565 955 574" fill="none" stroke="#e88aa0" stroke-width="1.3"/>
<path d="M800 240 Q815 270 830 300" fill="none" stroke="#e88aa0" stroke-width="1.3"/>
<path d="M950 300 Q990 285 1030 270 Q1060 258 1080 250" fill="none" stroke="#a3c6e8" stroke-width="0.9"/>
<path d="M960 330 Q1000 320 1040 300 Q1070 290 1100 290" fill="none" stroke="#a3c6e8" stroke-width="0.9"/>
<path d="M1000 470 Q1040 480 1080 470 Q1110 465 1140 440" fill="none" stroke="#a3c6e8" stroke-width="0.9"/>
<path d="M640 300 Q660 320 680 310" fill="none" stroke="#a3c6e8" stroke-width="0.9"/>
<path d="M600 470 Q620 500 640 520" fill="none" stroke="#a3c6e8" stroke-width="0.9"/>
<path d="M830 540 Q850 550 870 545" fill="none" stroke="#a3c6e8" stroke-width="0.9"/>
<path d="M760 330 Q790 345 810 360" fill="none" stroke="#a3c6e8" stroke-width="0.9"/>
<path d="M1000 420 Q1020 405 1050 400" fill="none" stroke="#a3c6e8" stroke-width="0.9"/>
<path d="M563 253 L615 260 L673 246 L681 237" fill="none" stroke="#8c8c8c" stroke-width="1.4"/>
<path d="M655 250 Q680 280 695 300 L702 312" fill="none" stroke="#8c8c8c" stroke-width="1.4"/>
<path d="M744 237 L745 264 L759 283 L770 292 L795 296 L812 306 Q818 340 822 390 Q828 440 835 480" fill="none" stroke="#8c8c8c" stroke-width="1.4"/>
<path d="M557 275 Q570 310 585 325 Q600 360 598 400" fill="none" stroke="#8c8c8c" stroke-width="1.4"/>
<path d="M700 312 Q720 340 735 370 Q745 395 760 410 Q770 430 800 445" fill="none" stroke="#8c8c8c" stroke-width="1.4"/>
<path d="M685 440 Q690 470 695 490 Q705 520 718 540 L745 543 Q760 550 785 574" fill="none" stroke="#8c8c8c" stroke-width="1.4"/>
<path d="M1065 268 Q1058 285 1060 300 Q1070 320 1090 330" fill="none" stroke="#8c8c8c" stroke-width="1.4"/>
<path d="M1020 330 Q990 340 960 360" fill="none" stroke="#8c8c8c" stroke-width="1.4"/>
<path d="M1103 310 Q1090 320 1060 340 Q1030 355 1000 365" fill="none" stroke="#8c8c8c" stroke-width="1.4"/>
<path d="M1125 420 Q1100 430 1080 440 Q1050 455 1030 470" fill="none" stroke="#8c8c8c" stroke-width="1.4"/>
<path d="M1150 460 Q1120 480 1100 490" fill="none" stroke="#8c8c8c" stroke-width="1.4"/>
<path d="M870 560 Q880 545 900 540" fill="none" stroke="#8c8c8c" stroke-width="1.4"/>
<polygon points="414.0,237.0 551.0,237.0 555.0,260.0 557.0,275.0 560.0,284.0 559.0,295.0 564.7,305.0 574.7,315.0 584.7,325.0 592.0,340.0 596.0,355.0 596.0,380.0 595.0,400.0 605.0,420.0 625.0,440.0 645.0,459.7 659.7,463.6 669.5,475.4 675.4,485.2 687.2,497.0 693.0,506.9 699.0,514.8 701.0,522.6 699.0,530.5 710.8,536.4 718.7,538.4 738.4,542.3 758.0,550.2 777.7,565.9 785.6,574.0 429.0,574.0 424.0,520.0 420.0,470.0 420.0,430.0 414.0,405.0" fill="#aad3df" stroke="#9aa8ae" stroke-width="0.6"/>
<polygon points="699.0,530.5 687.2,532.5 683.3,538.4 689.2,546.2 699.0,548.2 705.0,542.3 710.8,536.4" fill="#e4ecd6" stroke="#9aa8ae" stroke-width="0.6"/>
<ellipse cx="653.8" cy="552" rx="4.5" ry="7.5" transform="rotate(-25 653.8 552)" fill="#c9e0b4" stroke="#8fa890" stroke-width="0.6"/>
<polygon points="1019.6,237.0 1033.0,246.5 1044.4,254.0 1055.8,261.8 1063.4,267.5 1084.4,274.2 1091.0,277.0 1099.4,286.7 1103.5,308.0 1115.6,339.0 1123.6,358.0 1134.4,387.5 1139.7,420.0 1143.0,425.6 1148.0,451.0 1158.4,474.0 1173.8,497.0 1183.0,512.0 1183.0,237.0" fill="#aad3df" stroke="#9aa8ae" stroke-width="0.6"/>
<path d="M812 486 Q822 481 830 486 Q836 495 832 506 Q825 514 816 511 Q809 505 810 495 Z" fill="#aad3df" stroke="#9aa8ae" stroke-width="0.5"/>
<path d="M496 237 L496 250 L452 281 Q442 295 440 310 L432 354 Q433 380 443 400" fill="none" stroke="#a59dbb" stroke-width="2.2"/>
<path d="M414 357 Q425 358 433 363" fill="none" stroke="#a59dbb" stroke-width="2"/>
<path d="M1118 237 L1145 274.6 L1161 325.7 L1183 395.6" fill="none" stroke="#a59dbb" stroke-width="2.2"/>
<path d="M548 280 L414 355" fill="none" stroke="#7f9fe6" stroke-width="0.9" stroke-dasharray="4 3"/>
<path d="M502 237 L562 400" fill="none" stroke="#7f9fe6" stroke-width="0.9" stroke-dasharray="4 3"/>
<path d="M557 283 L525 420" fill="none" stroke="#7f9fe6" stroke-width="0.9" stroke-dasharray="4 3"/>
<path d="M557 283 L600 380" fill="none" stroke="#7f9fe6" stroke-width="0.9" stroke-dasharray="4 3"/>
<path d="M414 445 L470 395" fill="none" stroke="#7f9fe6" stroke-width="0.9" stroke-dasharray="4 3"/>
<path d="M660 500 L414 560" fill="none" stroke="#7f9fe6" stroke-width="0.9" stroke-dasharray="4 3"/>
<path d="M680 525 L700 574" fill="none" stroke="#7f9fe6" stroke-width="0.9" stroke-dasharray="4 3"/>
<path d="M1078 265 L1125 237" fill="none" stroke="#7f9fe6" stroke-width="0.9" stroke-dasharray="4 3"/>
<path d="M1080 268 L1183 276" fill="none" stroke="#7f9fe6" stroke-width="0.9" stroke-dasharray="4 3"/>
<path d="M1088 275 L1183 330" fill="none" stroke="#7f9fe6" stroke-width="0.9" stroke-dasharray="4 3"/>
<line x1="480.5" y1="237" x2="480.5" y2="574" stroke="#b8b8b8" stroke-width="0.8" opacity="0.7"/>
<line x1="710.5" y1="237" x2="710.5" y2="574" stroke="#b8b8b8" stroke-width="0.8" opacity="0.7"/>
<line x1="941.5" y1="237" x2="941.5" y2="574" stroke="#b8b8b8" stroke-width="0.8" opacity="0.7"/>
<line x1="1170.5" y1="237" x2="1170.5" y2="574" stroke="#b8b8b8" stroke-width="0.8" opacity="0.7"/>
<line x1="414" y1="393" x2="1183" y2="393" stroke="#b8b8b8" stroke-width="0.8" opacity="0.7"/>
<path d="M790 460 Q800 500 790 520 Q780 540 790 574" fill="none" stroke="#a49cb0" stroke-width="1.2"/>
<path d="M1040 460 Q1060 480 1070 520 Q1065 550 1080 574" fill="none" stroke="#a49cb0" stroke-width="1.2"/>
<text x="563.4" y="250.7" style="font-family:'Liberation Sans';font-size:9px;font-weight:400;fill:#4a4a4a;paint-order:stroke;stroke:#ffffff;stroke-opacity:0.75;stroke-width:2px;letter-spacing:0px">Pisa</text>
<text x="541" y="288.4" style="font-family:'Liberation Sans';font-size:9px;font-weight:400;fill:#4a4a4a;paint-order:stroke;stroke:#ffffff;stroke-opacity:0.75;stroke-width:2px;letter-spacing:-0.2px">Livorno</text>
<text x="692" y="239.7" style="font-family:'Liberation Sans';font-size:10px;font-weight:400;fill:#4a4a4a;paint-order:stroke;stroke:#ffffff;stroke-opacity:0.75;stroke-width:2px;letter-spacing:0px">Firenze</text>
<text x="688.8" y="316.5" style="font-family:'Liberation Sans';font-size:9px;font-style:italic;font-weight:400;fill:#8a8a9a;paint-order:stroke;stroke:#ffffff;stroke-opacity:0.75;stroke-width:2px;letter-spacing:-0.2px">Toscana</text>
<text x="713" y="340.3" style="font-family:'Liberation Sans';font-size:9px;font-weight:400;fill:#4a4a4a;paint-order:stroke;stroke:#ffffff;stroke-opacity:0.75;stroke-width:2px;letter-spacing:0px">Siena</text>
<text x="800.3" y="307.8" style="font-family:'Liberation Sans';font-size:9px;font-weight:400;fill:#4a4a4a;paint-order:stroke;stroke:#ffffff;stroke-opacity:0.75;stroke-width:2px;letter-spacing:-0.3px">Arezzo</text>
<text x="669.5" y="466.6" style="font-family:'Liberation Sans';font-size:9px;font-weight:400;fill:#4a4a4a;paint-order:stroke;stroke:#ffffff;stroke-opacity:0.75;stroke-width:2px;letter-spacing:-0.4px">Grosseto</text>
<text x="835" y="543.6" style="font-family:'Liberation Sans';font-size:9px;font-weight:400;fill:#4a4a4a;paint-order:stroke;stroke:#ffffff;stroke-opacity:0.75;stroke-width:2px;letter-spacing:-0.4px">Viterbo</text>
<text x="882" y="388" style="font-family:'Liberation Sans';font-size:9px;font-weight:400;fill:#555;letter-spacing:-0.3px">Perugia</text>
<text x="929" y="509.8" style="font-family:'Liberation Sans';font-size:9px;font-weight:400;fill:#555;letter-spacing:0px">Terni</text>
<text x="1022.8" y="337.8" style="font-family:'Liberation Sans';font-size:9px;font-style:italic;font-weight:400;fill:#7a6a8a;paint-order:stroke;stroke:#ffffff;stroke-opacity:0.75;stroke-width:2px;letter-spacing:-0.2px">Marche</text>
<text x="1066.6" y="273.3" style="font-family:'Liberation Sans';font-size:9px;font-weight:400;fill:#4a4a4a;paint-order:stroke;stroke:#ffffff;stroke-opacity:0.75;stroke-width:2px;letter-spacing:-0.3px">Ancona</text>
<text x="1095.8" y="488.2" style="font-family:'Liberation Sans';font-size:9px;font-weight:400;fill:#4a4a4a;paint-order:stroke;stroke:#ffffff;stroke-opacity:0.75;stroke-width:2px;letter-spacing:-0.4px">Teramo</text>
<text x="1047.3" y="557.2" style="font-family:'Liberation Sans';font-size:9px;font-weight:400;fill:#4a4a4a;paint-order:stroke;stroke:#ffffff;stroke-opacity:0.75;stroke-width:2px;letter-spacing:-0.4px">L'Aquila</text>
<text x="1000" y="421.7" style="font-family:'Liberation Sans';font-size:9px;font-style:italic;font-weight:400;fill:#3d9a4a;paint-order:stroke;stroke:#ffffff;stroke-opacity:0.75;stroke-width:2px;letter-spacing:-0.5px">Parco Nazionale</text>
<text x="1014" y="432" style="font-family:'Liberation Sans';font-size:9px;font-style:italic;font-weight:400;fill:#3d9a4a;paint-order:stroke;stroke:#ffffff;stroke-opacity:0.75;stroke-width:2px;letter-spacing:-0.4px">dei Monti</text>
<text x="1014" y="442" style="font-family:'Liberation Sans';font-size:9px;font-style:italic;font-weight:400;fill:#3d9a4a;paint-order:stroke;stroke:#ffffff;stroke-opacity:0.75;stroke-width:2px;letter-spacing:-0.4px">Sibillini</text>
<text x="1038" y="502" style="font-family:'Liberation Sans';font-size:9px;font-style:italic;font-weight:400;fill:#3d9a4a;paint-order:stroke;stroke:#ffffff;stroke-opacity:0.75;stroke-width:2px;letter-spacing:-0.5px">Parco Nazionale</text>
<text x="1053.7" y="513.7" style="font-family:'Liberation Sans';font-size:9px;font-style:italic;font-weight:400;fill:#3d9a4a;paint-order:stroke;stroke:#ffffff;stroke-opacity:0.75;stroke-width:2px;letter-spacing:-0.4px">del Gran</text>
<text x="1055" y="524" style="font-family:'Liberation Sans';font-size:9px;font-style:italic;font-weight:400;fill:#3d9a4a;paint-order:stroke;stroke:#ffffff;stroke-opacity:0.75;stroke-width:2px;letter-spacing:-0.4px">Sasso e</text>
<text x="1048.6" y="535.4" style="font-family:'Liberation Sans';font-size:9px;font-style:italic;font-weight:400;fill:#3d9a4a;paint-order:stroke;stroke:#ffffff;stroke-opacity:0.75;stroke-width:2px;letter-spacing:-0.4px">Monti della</text>
<text x="1060" y="545.7" style="font-family:'Liberation Sans';font-size:9px;font-style:italic;font-weight:400;fill:#3d9a4a;paint-order:stroke;stroke:#ffffff;stroke-opacity:0.75;stroke-width:2px;letter-spacing:-0.4px">Laga</text>
<text x="445" y="393" style="font-family:'Liberation Sans';font-size:9px;font-style:italic;font-weight:400;fill:#3d9a4a;paint-order:stroke;stroke:#ffffff;stroke-opacity:0.75;stroke-width:2px;letter-spacing:-0.5px">Parco Nazionale</text>
<path d="M868.3 271.0 L870.8 274.0 L875.2 274.7 L879.6 274.7 L882.6 276.9 L885.5 273.2 L892.8 270.3 L894.3 271.7 L892.8 274.7 L894.7 277.6 L890.6 282.0 L885.5 285.0 L887.0 289.4 L891.4 290.0 L897.2 293.8 L901.0 289.4 L905.3 287.9 L908.8 291.4 L913.2 289.7 L917.6 295.0 L919.4 297.6 L926.4 304.6 L935.2 311.7 L938.7 310.8 L950.2 310.8 L952.8 306.4 L957.2 305.5 L960.7 308.2 L959.9 312.6 L961.6 315.2 L956.3 321.4 L959.9 329.3 L963.4 336.3 L964.3 345.1 L969.5 349.5 L970.4 353.9 L974.8 361.0 L973.9 368.0 L971.3 376.8 L972.2 380.4 L977.5 382.1 L979.2 387.4 L980.0 395.0 L978.9 404.0 L983.3 418.8 L989.2 424.6 L995.0 430.5 L1003.9 427.6 L1015.6 433.4 L1027.4 440.8 L1037.7 439.3 L1039.1 454.0 L1036.2 461.4 L1028.9 468.7 L1027.4 480.4 L1021.5 484.9 L1009.8 489.3 L998.0 492.2 L986.3 496.6 L979.0 501.0 L979.0 506.9 L968.6 509.8 L961.3 512.8 L955.4 520.1 L954.0 528.9 L945.1 530.4 L936.3 533.3 L933.4 539.2 L931.9 545.1 L918.7 549.5 L909.9 542.1 L901.1 536.3 L904.0 530.4 L898.1 523.0 L889.3 521.6 L879.0 515.7 L876.1 504.0 L871.7 495.1 L868.8 483.4 L864.3 480.4 L845.3 486.3 L836.4 483.4 L827.6 479.0 L821.8 471.6 L824.7 462.8 L823.2 454.0 L817.3 445.2 L818.8 439.3 L826.2 436.4 L824.7 418.8 L827.6 410.0 L827.6 398.2 L823.2 389.4 L820.6 383.3 L822.6 373.0 L830.8 364.8 L841.1 358.7 L851.4 354.6 L863.7 350.4 L866.0 344.0 L858.0 340.0 L855.5 327.8 L845.2 323.7 L838.0 315.5 L849.3 307.3 L857.0 301.1 L848.0 295.2 L849.5 289.4 L859.0 284.2 Z" fill="#47b08a" fill-opacity="0.93"/>
<path d="M877.1 298.8 L880.4 294.4 L882.5 289.5 L885.9 286.1 M877.1 298.8 L875.0 297.0 M875.0 297.0 L873.3 292.5 L874.6 287.0 L873.4 281.8 M885.7 284.9 L880.8 282.3 L874.5 280.4 M874.5 280.4 L873.4 281.8 M849.2 296.0 L853.8 295.9 L860.5 295.2 L864.7 295.9 L870.5 296.4 L875.0 297.0 M858.6 284.4 L863.1 283.3 L868.6 283.4 L873.4 281.8 M883.8 308.9 L880.1 304.7 L877.1 298.8 M883.8 308.9 L885.8 309.9 M885.8 309.9 L891.3 308.4 M891.3 308.4 L894.5 303.3 L898.6 298.4 L904.5 295.5 L907.9 290.5 M907.1 540.3 L912.5 532.3 M932.3 543.4 L926.6 539.8 L922.2 538.5 L918.3 535.7 L912.5 532.3 M979.3 494.4 L975.7 493.8 M979.3 494.4 L979.7 488.3 L979.5 484.0 M956.2 482.4 L957.3 475.1 L959.0 469.5 M975.7 493.8 L970.9 491.1 L965.2 487.4 L961.8 484.0 L956.2 482.4 M959.0 469.5 L963.9 473.4 L968.4 475.0 L971.5 478.4 L975.8 482.3 L979.5 484.0 M881.2 431.0 L881.2 431.0 M881.2 431.0 L885.4 426.3 L889.5 422.6 L892.5 419.1 L895.9 414.3 M895.9 414.3 L892.9 407.4 M892.9 407.4 L886.2 408.5 L882.6 408.2 L876.9 408.5 L870.8 409.1 L866.2 409.5 M881.2 431.0 L877.0 426.7 L875.6 422.2 L872.4 419.3 L870.3 412.8 L866.2 409.5 M893.0 406.0 L892.9 407.4 M893.0 406.0 L889.3 401.9 L882.9 396.8 L879.7 392.7 M879.7 392.7 L875.3 395.7 L872.4 402.1 L868.2 406.0 L865.0 409.2 M866.2 409.5 L865.0 409.2 M879.7 392.7 L874.2 384.6 M860.2 408.6 L865.0 409.2 M860.2 408.6 L863.2 401.6 L866.2 396.7 L867.8 390.3 M867.8 390.3 L874.2 384.6 M845.1 398.1 L840.4 399.4 L834.1 399.2 L827.6 400.3 M845.1 398.1 L845.4 398.5 M845.4 398.5 L842.8 403.9 L839.6 406.8 L835.9 411.2 L830.9 414.3 L827.4 419.0 L825.1 424.0 M855.7 410.3 L860.2 408.6 M854.9 409.9 L855.7 410.3 M846.7 384.2 L851.1 385.7 L857.8 387.3 L862.3 389.1 L867.8 390.3 M854.9 409.9 L849.7 404.1 L845.4 398.5 M846.7 384.2 L846.6 390.9 L845.1 398.1 M854.9 409.9 L849.2 413.7 L845.6 415.1 L839.8 418.3 L835.5 420.2 L830.3 423.7 M825.2 424.5 L830.3 423.7 M838.8 456.8 L832.8 458.2 L830.0 460.2 L824.5 463.3 M838.8 456.8 L836.4 450.6 L833.5 445.3 L831.8 439.9 L828.5 434.4 L826.6 430.1 L825.2 424.8 M900.7 417.1 L904.2 417.8 M900.7 417.1 L898.4 415.6 M898.4 415.6 L901.8 410.7 L907.2 408.1 L912.4 403.6 L916.1 400.9 L919.6 398.7 L925.3 393.9 M904.2 417.8 L907.9 414.2 L912.9 412.0 L917.7 410.0 L920.8 406.7 L926.7 404.9 L931.3 402.9 L934.9 400.5 M925.3 393.9 L931.1 396.0 L934.7 399.2 M934.9 400.5 L934.7 399.2 M927.3 373.7 L925.7 379.6 L926.3 387.1 L924.5 393.3 M924.5 393.3 L925.3 393.9 M937.0 370.6 L939.0 375.4 L942.2 383.5 L944.0 388.2 M937.0 370.6 L932.4 370.8 L927.3 373.7 M944.0 388.2 L938.2 392.6 L934.7 399.2 M959.2 383.5 L953.3 383.9 L947.9 387.0 L944.0 388.2 M937.0 370.6 L937.8 364.1 M959.2 383.5 L958.5 376.9 M958.5 376.9 L955.8 372.2 L952.3 369.1 L947.3 365.3 M937.8 364.1 L947.3 365.3 M961.6 362.0 L954.6 360.0 M961.6 362.0 L967.0 359.3 L970.8 354.5 M954.8 346.5 L960.3 341.0 L963.6 337.9 M954.8 346.5 L951.0 354.8 M954.6 360.0 L951.0 354.8 M958.5 376.9 L959.0 372.2 L961.7 365.9 L961.6 362.0 M947.3 365.3 L954.6 360.0 M930.7 351.8 L931.3 350.3 M930.7 351.8 L934.6 356.4 M931.3 350.3 L936.7 350.2 L942.1 348.1 L948.5 347.9 L954.8 346.5 M934.6 356.4 L941.2 355.0 L946.1 355.9 L951.0 354.8 M937.8 364.1 L934.6 356.4 M930.7 351.8 L926.4 353.2 L921.5 354.0 L915.3 355.6 M927.3 373.7 L919.7 370.8 M915.3 355.6 L914.4 358.0 M919.7 370.8 L916.8 363.7 L914.4 358.0 M907.3 332.2 L909.4 326.4 M907.3 332.2 L913.3 333.9 L917.2 334.9 L923.6 337.8 L928.8 339.0 L933.4 341.0 M909.4 326.4 L915.0 322.3 L920.7 319.9 M920.7 319.9 L924.8 323.1 L927.7 329.5 L931.7 332.2 L934.7 337.7 M933.4 341.0 L934.7 337.7 M901.8 428.7 L897.7 434.3 L895.0 438.1 M900.7 417.1 L901.6 423.9 L901.8 428.7 M885.2 441.3 L890.0 442.1 M881.2 431.0 L884.2 436.0 L885.2 441.3 M895.9 414.3 L898.4 415.6 M890.0 442.1 L895.0 438.1 M901.8 428.7 L904.9 435.9 M904.9 435.9 L900.0 437.7 M895.0 438.1 L900.0 437.7 M931.6 443.1 L934.6 448.7 L935.4 453.1 M931.6 443.1 L925.0 443.2 L918.1 443.8 L912.9 444.5 M935.4 453.1 L929.8 457.5 M929.8 457.5 L926.0 457.3 L919.9 459.2 M919.9 459.2 L915.1 453.4 L910.1 449.6 M910.1 449.6 L911.9 445.4 M912.9 444.5 L911.9 445.4 M904.9 435.9 L907.3 441.0 L911.9 445.4 M919.5 426.9 L916.6 431.6 L914.2 439.0 L912.9 444.5 M919.5 426.9 L914.6 422.6 L908.6 422.0 L904.2 417.8 M929.8 457.5 L930.7 464.2 L933.0 470.4 M936.5 453.3 L938.8 458.7 L941.8 463.3 L944.1 467.1 M944.1 467.1 L937.6 471.5 M935.4 453.1 L936.5 453.3 M933.0 470.4 L937.6 471.5 M944.1 467.1 L949.2 467.1 L953.2 467.5 L959.0 469.3 M944.6 488.6 L949.4 488.8 M956.2 482.4 L949.4 488.8 M944.6 488.6 L940.2 487.1 M959.0 469.5 L959.0 469.3 M937.6 471.5 L939.3 475.7 L938.1 483.1 L940.2 487.1 M950.3 449.2 L953.1 454.5 L956.5 457.6 L961.2 461.9 M951.4 441.9 L950.3 449.2 M973.0 441.0 L966.9 442.1 L962.5 441.8 L957.5 442.6 L951.4 441.9 M973.0 441.0 L975.0 445.3 M975.0 445.3 L971.1 449.8 L968.0 452.6 L965.5 458.0 L961.2 461.9 M950.3 449.2 L944.2 450.5 L936.5 453.3 M959.0 469.3 L961.1 465.9 M961.2 461.9 L961.1 465.9 M979.5 484.0 L981.4 479.1 L983.7 473.2 L984.9 469.5 M961.1 465.9 L966.7 466.8 L971.9 467.8 L979.6 468.4 L984.9 469.5 M1012.6 488.3 L1009.5 482.9 L1004.9 476.5 L1002.2 471.2 M979.3 494.4 L983.3 498.4 M1002.2 471.2 L998.3 469.9 L991.7 468.3 L986.7 468.5 M986.7 468.5 L984.9 469.5 M857.1 421.6 L862.2 425.4 M857.1 421.6 L853.2 427.0 L850.8 434.2 M862.2 425.4 L863.7 431.9 L863.9 438.5 L863.2 443.2 M850.8 434.2 L851.3 440.5 L851.2 444.3 L851.3 449.7 M851.3 449.7 L857.9 450.3 M857.9 450.3 L863.2 443.2 M855.7 410.3 L857.6 417.0 L857.1 421.6 M881.2 431.0 L874.3 431.9 M874.3 431.9 L869.4 428.6 L862.2 425.4 M830.3 423.7 L836.1 426.1 L841.8 430.0 L845.2 432.7 L850.8 434.2 M874.3 431.9 L869.8 434.6 L867.5 438.9 L863.2 443.2 M838.8 456.8 L838.9 456.8 M838.9 456.8 L845.1 453.6 L851.3 449.7 M862.8 342.4 L857.3 336.6 M862.8 350.7 L862.7 355.3 M862.7 355.3 L857.0 358.4 L853.1 360.0 L849.1 362.5 M834.5 362.6 L841.4 363.2 L849.1 362.5 M883.8 308.9 L879.0 309.6 L872.0 310.8 L867.5 311.5 L861.4 314.5 L857.5 316.3 L852.9 317.3 L845.9 316.7 L840.9 318.8 M885.8 309.9 L884.3 314.8 L883.8 319.8 M883.8 319.8 L878.3 326.8 M878.3 326.8 L872.9 328.2 L867.0 330.4 L861.3 330.8 L856.4 332.2 M875.2 274.7 L874.5 280.4 M846.7 384.2 L846.4 382.6 M846.4 382.6 L843.8 378.8 L838.6 372.7 L836.2 367.6 L831.7 364.3 M846.4 382.6 L851.1 380.3 L857.8 377.0 L862.1 374.7 L868.9 373.1 M868.9 373.1 L868.8 371.8 M868.8 371.8 L864.6 369.4 L860.2 367.9 L855.3 363.6 L849.1 362.5 M931.6 443.1 L933.0 435.2 L936.0 429.9 M951.4 441.9 L949.3 436.1 M949.3 436.1 L942.5 432.6 L936.0 429.9 M934.9 400.5 L938.3 408.9 M919.5 426.9 L925.3 425.7 L933.4 424.2 M938.3 408.9 L935.6 413.5 L934.4 419.9 L933.4 424.2 M933.4 424.2 L936.0 429.9 M924.5 393.3 L923.8 393.0 M919.7 370.8 L918.1 375.2 L917.0 380.8 M923.8 393.0 L919.2 386.7 L917.0 380.8 M914.4 358.0 L910.6 362.2 L907.1 366.3 L901.9 369.2 M901.9 369.2 L906.1 378.0 M917.0 380.8 L910.9 378.5 L906.1 378.0 M880.7 347.2 L880.3 352.9 L878.5 357.1 M880.7 347.2 L874.9 346.6 L869.3 343.6 L863.5 342.7 M862.7 355.3 L865.6 359.2 L870.3 365.5 M878.5 357.1 L874.8 362.3 L870.3 365.5 M868.8 371.8 L869.7 369.4 M870.3 365.5 L869.7 369.4 M881.5 346.7 L887.9 346.6 L892.1 346.6 M881.5 346.7 L881.7 342.5 L881.0 336.0 M881.0 336.0 L887.6 334.0 L892.6 331.4 M892.1 346.6 L897.3 344.0 L902.8 341.4 M892.6 331.4 L896.9 335.0 L903.0 340.1 M903.0 340.1 L902.8 341.4 M880.7 347.2 L881.5 346.7 M878.3 326.8 L881.0 336.0 M883.8 319.8 L888.7 326.9 L892.6 331.4 M891.3 308.4 L895.1 311.8 L898.2 315.5 L903.0 319.1 L907.0 321.9 L909.4 326.4 M907.3 332.2 L903.0 340.1 M931.3 350.3 L933.4 341.0 M915.3 355.6 L910.7 350.9 L906.8 347.0 L902.8 341.4 M934.7 337.7 L942.2 333.5 M920.7 319.9 L923.7 316.1 L925.2 308.8 L927.0 305.1 M942.2 333.5 L940.8 328.1 L938.9 322.0 L937.8 318.1 L935.6 311.6 M891.1 442.8 L898.5 445.3 M891.1 442.8 L891.9 449.6 L894.5 455.6 L896.6 462.0 M898.5 445.3 L905.0 448.8 L909.5 449.8 M909.5 449.8 L906.3 453.2 L903.4 457.4 L898.7 462.4 M898.7 462.4 L896.6 462.0 M890.0 442.1 L891.1 442.8 M900.0 437.7 L898.5 445.3 M910.1 449.6 L909.5 449.8 M934.3 537.4 L932.3 532.3 L930.5 524.9 L929.3 519.6 M912.5 532.3 L911.4 524.4 M911.4 524.4 L918.5 523.9 L922.8 520.9 L929.3 519.6 M864.1 453.7 L867.3 459.4 M864.1 453.7 L868.2 450.9 L872.8 451.3 L877.0 447.5 L882.7 446.3 M867.3 459.4 L874.9 464.0 M882.7 446.3 L884.4 451.5 M884.4 451.5 L879.9 456.3 L877.0 463.2 M874.9 464.0 L877.0 463.2 M854.8 483.3 L852.2 479.6 L850.4 474.8 L847.7 468.8 L843.6 466.8 L840.4 460.6 L838.9 456.8 M859.7 481.8 L861.5 475.6 L863.6 469.5 L864.7 466.2 L867.3 459.4 M857.9 450.3 L864.1 453.7 M885.2 441.3 L882.7 446.3 M877.1 472.9 L874.9 464.0 M865.1 480.9 L870.2 477.9 L877.1 472.9 M892.3 461.7 L896.6 462.0 M892.3 461.7 L887.5 457.9 L884.4 451.5 M892.3 461.7 L890.2 463.1 M890.2 463.1 L884.1 463.5 L877.0 463.2 M890.2 463.1 L885.9 468.3 L883.4 475.9 M883.4 475.9 L877.1 472.9 M953.2 500.9 L950.2 505.6 L945.8 511.9 M953.2 500.9 L958.3 502.8 M962.0 507.8 L958.3 502.8 M962.0 507.8 L956.1 513.2 L951.8 517.0 M951.8 517.0 L945.8 511.9 M975.7 493.8 L970.9 495.6 L965.3 499.9 L958.3 502.8 M949.4 488.8 L951.0 493.9 L953.2 500.9 M965.4 511.1 L962.0 507.8 M955.3 520.8 L951.8 517.0 M1028.6 470.9 L1025.9 466.8 L1023.1 459.2 L1020.3 453.8 L1018.4 450.5 L1016.4 444.0 M1002.2 471.2 L1003.0 463.9 L1006.0 458.3 M1006.0 458.3 L1010.2 455.0 L1013.4 448.5 L1015.3 444.6 M1016.4 444.0 L1015.3 444.6 M1016.4 444.0 L1022.5 437.7 M959.2 383.5 L963.9 386.5 L969.4 387.7 L974.0 387.8 L979.6 390.9 M986.3 449.3 L991.9 448.4 L999.0 446.4 L1004.2 444.8 L1010.3 443.2 M986.3 449.3 L983.1 448.8 M983.1 448.8 L982.5 448.1 M982.5 448.1 L986.3 443.9 L991.3 438.8 L994.4 435.4 M994.4 435.4 L999.9 439.1 L1005.9 439.7 L1010.3 443.2 M1015.3 444.6 L1010.3 443.2 M1006.0 458.3 L1002.3 456.9 L995.3 453.2 L990.4 450.3 L986.3 449.3 M986.7 468.5 L987.1 463.3 L985.9 457.6 L982.7 454.6 L983.1 448.8 M975.0 445.3 L982.5 448.1 M992.0 427.4 L994.4 435.4 M972.9 438.6 L978.1 436.7 L982.2 432.3 L986.8 428.1 L990.5 426.0 M972.9 438.6 L973.0 441.0 M949.3 436.1 L954.8 431.0 L960.1 426.3 M972.9 438.6 L969.7 433.5 L968.2 428.0 M960.1 426.3 L968.2 428.0 M981.5 412.9 L976.2 417.9 L971.9 422.8 M971.9 422.8 L968.2 428.0 M893.0 406.0 L893.8 404.5 M923.8 393.0 L916.9 392.8 L910.2 393.8 L903.9 393.8 M893.8 404.5 L900.1 400.3 L903.9 393.8 M906.1 378.0 L905.5 383.9 L903.0 387.9 M903.9 393.8 L903.0 387.9 M901.9 369.2 L898.9 369.3 M892.1 346.6 L891.9 354.3 L892.8 359.6 M898.9 369.3 L895.2 363.5 L892.8 359.6 M878.5 357.1 L884.3 361.8 M892.8 359.6 L884.3 361.8 M869.7 369.4 L875.0 369.2 L880.0 368.3 L885.8 367.1 M885.8 367.1 L884.3 361.8 M960.3 331.3 L957.6 330.8 M960.3 331.3 L959.8 329.0 M957.5 319.9 L955.3 314.2 L954.2 306.1 M957.6 330.8 L953.8 325.8 L950.3 321.8 L947.8 315.9 L942.9 310.8 M961.1 331.6 L960.3 331.3 M942.2 333.5 L947.2 332.9 L951.4 331.5 L957.6 330.8 M929.3 519.2 L926.0 516.8 L919.8 513.9 L916.7 509.8 M929.3 519.2 L932.8 514.6 M932.8 514.6 L932.7 513.3 M932.7 513.3 L930.5 509.0 L928.6 501.5 L927.1 496.7 M916.7 509.8 L914.6 505.8 L912.3 499.8 M927.1 496.7 L920.9 496.8 L915.1 495.0 M915.1 495.0 L912.3 499.8 M911.4 524.4 L906.3 523.1 L899.5 522.5 L894.1 521.3 L888.6 520.7 M929.3 519.6 L929.3 519.2 M888.6 520.7 L893.7 519.8 L898.2 516.1 L901.9 514.9 L907.6 512.5 L910.9 511.2 L916.7 509.8 M945.8 511.9 L938.7 512.0 L932.8 514.6 M944.6 488.6 L942.3 494.6 L939.9 499.1 L938.3 504.3 L936.1 508.2 L932.7 513.3 M940.2 487.1 L933.8 487.9 M933.8 487.9 L930.9 491.3 L927.1 496.7 M925.1 480.2 L930.2 472.0 M925.1 480.2 L919.3 479.9 M919.3 479.9 L920.7 472.3 L920.2 465.4 M930.2 472.0 L925.1 469.7 L920.2 465.4 M933.0 470.4 L930.2 472.0 M933.8 487.9 L928.9 483.2 L925.1 480.2 M919.9 459.2 L919.3 463.1 M919.3 463.1 L920.2 465.4 M901.9 471.0 L901.9 480.2 M901.9 471.0 L908.6 469.3 L913.6 467.1 M913.6 467.1 L913.6 473.0 L915.8 481.4 M901.9 480.2 L906.5 480.7 L911.9 483.7 M911.9 483.7 L915.8 481.4 M898.7 462.4 L901.9 471.0 M919.3 463.1 L913.6 467.1 M919.3 479.9 L915.8 481.4 M915.1 495.0 L914.3 488.6 L911.9 483.7 M951.7 412.5 L954.1 415.9 M951.7 412.5 L957.1 409.0 L963.6 406.1 M954.1 415.9 L960.0 415.8 L965.8 416.1 M963.6 406.1 L965.0 411.5 L965.8 416.1 M938.3 408.9 L944.9 409.6 L951.7 412.5 M960.1 426.3 L958.3 421.6 L954.1 415.9 M979.9 394.3 L974.8 397.1 L972.4 401.5 L966.5 401.9 L963.6 406.1 M971.9 422.8 L965.8 416.1 M893.8 404.5 L892.8 398.7 L891.9 393.3 M903.0 387.9 L896.0 383.5 M891.9 393.3 L895.0 389.2 L896.0 383.5 M889.2 370.7 L893.5 372.4 M889.2 370.7 L882.8 372.5 L877.5 375.7 L871.3 376.7 M893.5 372.4 L891.0 379.3 M891.0 379.3 L888.9 381.2 M888.9 381.2 L883.3 382.1 L878.1 383.8 L874.2 384.5 M874.2 384.5 L871.3 376.7 M898.9 369.3 L893.5 372.4 M885.8 367.1 L889.2 370.7 M868.9 373.1 L871.3 376.7 M896.0 383.5 L891.0 379.3 M891.9 393.3 L889.2 388.4 L888.9 381.2 M874.2 384.6 L874.2 384.5 M912.3 499.8 L906.7 501.6 L899.8 502.2 L895.1 505.4 L889.5 506.1 M901.9 480.2 L901.3 480.6 M889.5 506.1 L891.9 500.4 L895.5 496.3 L896.6 490.0 L898.4 486.7 L901.3 480.6 M878.7 514.4 L879.0 509.3 L881.5 503.8 L883.1 500.1 L884.5 494.6 L884.1 487.7 L885.9 483.2 L887.3 478.6 M871.6 494.8 L873.8 491.1 L876.9 486.4 L881.8 480.0 L883.6 476.3 M883.6 476.3 L887.3 478.6 M888.6 520.7 L887.7 520.7 M889.5 506.1 L885.3 510.6 L879.0 515.6 M901.3 480.6 L893.5 478.8 L887.3 478.6 M883.4 475.9 L883.6 476.3" fill="none" stroke="#4a4a42" stroke-width="1.1" opacity="0.85"/>
<path d="M935.2 311.7 L937.9 320.5 L929.9 322.3 L927.3 324.0 L921.1 336.3 L915.8 345.0 L910.6 348.7 L914.0 361.0 L921.0 362.7 L924.6 368.0 L922.9 378.6 L919.4 385.6 L915.8 394.4 L912.8 400.0 L909.9 407.0 L912.8 415.8 L915.8 418.8 L927.5 433.4 L933.4 448.1 L927.5 457.0 L933.4 471.6 L939.3 480.4 L948.0 486.3 L959.8 480.4 L968.6 459.9 L973.0 439.3 L965.7 427.6 L980.4 424.6 L989.2 424.6 M824.7 421.7 L845.3 423.2 L868.8 423.2 L884.9 427.6 L887.9 418.8 L892.3 404.0 L895.2 386.4 L898.1 377.6 L902.0 368.0 L905.0 356.0 M884.9 427.6 L886.4 448.1 L883.4 454.0 L870.2 452.5 L865.8 459.9 L864.3 480.4 M886.4 448.1 L895.2 436.4 L907.0 442.3 L912.0 430.0 L915.8 418.8 M939.3 480.4 L927.5 486.3 L915.8 495.1 L911.4 504.0 L918.7 509.8 L933.4 517.2 L936.3 533.3 M933.4 517.2 L945.0 515.0 L955.4 520.1" fill="none" stroke="#0a0a82" stroke-width="2.7" stroke-linejoin="round"/>
<path d="M868.3 271.0 L870.8 274.0 L875.2 274.7 L879.6 274.7 L882.6 276.9 L885.5 273.2 L892.8 270.3 L894.3 271.7 L892.8 274.7 L894.7 277.6 L890.6 282.0 L885.5 285.0 L887.0 289.4 L891.4 290.0 L897.2 293.8 L901.0 289.4 L905.3 287.9 L908.8 291.4 L913.2 289.7 L917.6 295.0 L919.4 297.6 L926.4 304.6 L935.2 311.7 L938.7 310.8 L950.2 310.8 L952.8 306.4 L957.2 305.5 L960.7 308.2 L959.9 312.6 L961.6 315.2 L956.3 321.4 L959.9 329.3 L963.4 336.3 L964.3 345.1 L969.5 349.5 L970.4 353.9 L974.8 361.0 L973.9 368.0 L971.3 376.8 L972.2 380.4 L977.5 382.1 L979.2 387.4 L980.0 395.0 L978.9 404.0 L983.3 418.8 L989.2 424.6 L995.0 430.5 L1003.9 427.6 L1015.6 433.4 L1027.4 440.8 L1037.7 439.3 L1039.1 454.0 L1036.2 461.4 L1028.9 468.7 L1027.4 480.4 L1021.5 484.9 L1009.8 489.3 L998.0 492.2 L986.3 496.6 L979.0 501.0 L979.0 506.9 L968.6 509.8 L961.3 512.8 L955.4 520.1 L954.0 528.9 L945.1 530.4 L936.3 533.3 L933.4 539.2 L931.9 545.1 L918.7 549.5 L909.9 542.1 L901.1 536.3 L904.0 530.4 L898.1 523.0 L889.3 521.6 L879.0 515.7 L876.1 504.0 L871.7 495.1 L868.8 483.4 L864.3 480.4 L845.3 486.3 L836.4 483.4 L827.6 479.0 L821.8 471.6 L824.7 462.8 L823.2 454.0 L817.3 445.2 L818.8 439.3 L826.2 436.4 L824.7 418.8 L827.6 410.0 L827.6 398.2 L823.2 389.4 L820.6 383.3 L822.6 373.0 L830.8 364.8 L841.1 358.7 L851.4 354.6 L863.7 350.4 L866.0 344.0 L858.0 340.0 L855.5 327.8 L845.2 323.7 L838.0 315.5 L849.3 307.3 L857.0 301.1 L848.0 295.2 L849.5 289.4 L859.0 284.2 Z" fill="none" stroke="#0a0a82" stroke-width="2.8" stroke-linejoin="round"/>
<path d="M903.1 270.5 L905.8 273.2 L903.1 275.9 L900.4 273.2 Z" fill="#0a0a82"/>
<text x="882" y="388" style="font-family:Liberation Sans;font-size:9px;fill:#3f5f55;opacity:0.8;letter-spacing:-0.3px">Perugia</text>
<text x="929" y="509.8" style="font-family:Liberation Sans;font-size:9px;fill:#3f5f55;opacity:0.8">Terni</text>
<rect x="760" y="298" width="225" height="82" fill="#ffffff" opacity="0.22"/>
<text x="380" y="381" textLength="440" lengthAdjust="spacingAndGlyphs" style="font-family:'Liberation Serif';font-size:125px;font-weight:700;fill:#ffffff;opacity:0.3">UMBRIA</text>
<text x="396" y="372" textLength="400" lengthAdjust="spacingAndGlyphs" style="font-family:'Liberation Serif';font-size:98px;fill:#ffffff;opacity:0.55">UMBRIA</text>
<rect x="778" y="307" width="138" height="65" rx="13" fill="#ffffff" opacity="0.36"/>
<text x="797" y="352" textLength="58" lengthAdjust="spacingAndGlyphs" style="font-family:'Liberation Sans';font-size:33px;font-weight:700;fill:#ffffff;opacity:0.3">SOC</text>
<text x="852" y="352" textLength="49" lengthAdjust="spacingAndGlyphs" style="font-family:'Liberation Sans';font-size:33px;font-weight:700;fill:#30a878;opacity:0.6">IAL</text>
<text x="919" y="354.5" textLength="48" lengthAdjust="spacingAndGlyphs" style="font-family:'Liberation Sans';font-size:42px;font-weight:700;fill:#30a878;opacity:0.5">AL</text>
</svg>
<!-- legend -->
<div class="a" style="left:429px;top:390px;width:216px;height:184px;background:#fff;border-radius:8px 8px 0 0"></div>
<div class="a" style="left:440px;top:402px;font-size:14px;color:#1467b3;transform:scaleX(0.88);transform-origin:0 0">Legenda</div>
<svg class="a" style="left:622px;top:400px" width="14" height="13" viewBox="0 0 14 13"><path d="M3 2.5 L11 10.5 M11 2.5 L3 10.5" stroke="#1467b3" stroke-width="2.6" stroke-linecap="round"/></svg>
<div class="a" style="left:439px;top:425px;width:15px">
 <div style="height:3px;background:#c8102e;margin-bottom:2px"></div><div style="height:3px;background:#c8102e;margin-bottom:2px"></div><div style="height:3px;background:#c8102e;margin-bottom:2px"></div><div style="height:4px;background:#c8102e"></div></div>
<div class="a" style="left:439px;top:453px;width:15px">
 <div style="height:3px;background:#ececec;margin-bottom:2px"></div><div style="height:3px;background:#e89a10;margin-bottom:2px"></div><div style="height:3px;background:#e89a10;margin-bottom:2px"></div><div style="height:4px;background:#e89a10"></div></div>
<div class="a" style="left:439px;top:481px;width:15px">
 <div style="height:3px;background:#ececec;margin-bottom:2px"></div><div style="height:3px;background:#ececec;margin-bottom:2px"></div><div style="height:3px;background:#f0e800;margin-bottom:2px"></div><div style="height:4px;background:#f0e800"></div></div>
<div class="a" style="left:439px;top:510px;width:15px">
 <div style="height:3px;background:#ececec;margin-bottom:2px"></div><div style="height:3px;background:#ececec;margin-bottom:2px"></div><div style="height:3px;background:#ececec;margin-bottom:2px"></div><div style="height:4px;background:#169b6f"></div></div>
<div class="a" style="left:461px;top:428px;font-size:12px;color:#3a3a3a;transform:scaleX(0.948);transform-origin:0 0">Fenomeni ingenti ed estesi</div>
<div class="a" style="left:461px;top:456px;font-size:12px;color:#3a3a3a;transform:scaleX(0.948);transform-origin:0 0">Fenomeni diffusi</div>
<div class="a" style="left:461px;top:484px;font-size:12px;color:#3a3a3a;transform:scaleX(0.948);transform-origin:0 0">Fenomeni localizzati</div>
<div class="a" style="left:461px;top:508px;font-size:12px;color:#3a3a3a;transform:scaleX(0.948);transform-origin:0 0;line-height:12px">Assenza di fenomeni significativi<br>prevedibili</div>
<svg class="a" style="left:438px;top:548px" width="12" height="12" viewBox="0 0 12 12"><circle cx="6" cy="6" r="5.5" fill="#1467b3"/><rect x="5.1" y="5" width="1.8" height="4.5" fill="#fff"/><circle cx="6" cy="3.2" r="1.1" fill="#fff"/></svg>
<div class="a" style="left:460px;top:549px;font-size:12px;font-weight:700;color:#1467b3;transform:scaleX(0.886);transform-origin:0 0">Guida alla mappa</div>

<!-- eye toggle -->
<div class="a" style="left:1120px;top:246px;width:54px;height:27px;border-radius:13.5px;background:#fff"></div>
<div class="a" style="left:1131px;top:251px;width:12px;height:12.5px;border:1.3px solid #1467b3;border-radius:2.5px"></div>
<svg class="a" style="left:1145px;top:252px" width="20" height="14" viewBox="0 0 20 14"><path d="M1.5 7 Q10 -1.5 18.5 7 Q10 15.5 1.5 7 Z" fill="none" stroke="#1467b3" stroke-width="1.5"/><circle cx="10" cy="7" r="4.2" fill="#1467b3"/><circle cx="8.6" cy="5.6" r="1.2" fill="#fff"/></svg>

<!-- zoom -->
<div class="a" style="left:1147px;top:505px;width:27px;height:54px;border-radius:13.5px;background:#fff;border:1.5px solid #c6c6cc"></div>
<div class="a" style="left:1155px;top:518.9px;width:12px;height:2.3px;background:#0d5fb0"></div>
<div class="a" style="left:1159.85px;top:515px;width:2.3px;height:11px;background:#0d5fb0"></div>
<div class="a" style="left:1155.4px;top:544.9px;width:11.6px;height:2.3px;background:#0d5fb0"></div>

<!-- attribution -->
<div class="a" style="left:1054px;top:559px;width:120px;height:15px;background:rgba(255,255,255,0.72)"></div>
<div class="a" style="left:1059px;top:561px;font-size:9px;color:#333;letter-spacing:0.05px"><span style="color:#1467b3;font-weight:700;letter-spacing:-0.3px">Leaflet</span> | © <span style="color:#1467b3;font-weight:700;letter-spacing:-0.35px">OpenStreetMap</span></div>
<!-- sidebar icons -->
<svg class="a" style="left:135px;top:236px" width="75" height="280" viewBox="135 236 75 280">
<path d="M149.5 242.2 L151.5 242.7 L153 244.5 L157.5 245.5 L158 248 L159 251.5 L160 255.5 L162 257.5 L165.5 258.5 L165 260.5 L161.5 263 L158 265 L154.5 268 L151 266 L149.5 263 L144.5 261 L144 258 L145 253 L144.5 251 L147.5 249 L146.5 246 L148 243.5 Z" fill="#083d57" stroke="#083d57" stroke-width="0.8" stroke-linejoin="round"/>
<!-- house -->
<path d="M192.8 288.8 L199.3 294.8 L197.6 294.8 L197.6 301.6 L194.2 301.6 L194.2 298.6 L191.6 298.6 L191.6 301.6 L188 301.6 L188 294.8 L186.3 294.8 Z" fill="#1467b3"/>
<path d="M183 303.2 Q185.5 302 188 303.2 T193 303.2 T198 303.2 T202.5 303.2 M183 305.6 Q185.5 304.4 188 305.6 T193 305.6 T198 305.6 T202.5 305.6" fill="none" stroke="#1467b3" stroke-width="1.1"/>
<!-- frane -->
<path d="M183.5 328 L190 332.5 L194 338 L198 343 L202 347 L183.5 347 Z" fill="#1467b3"/>
<path d="M190 332.5 L191.5 331.5 L193 333.5 L191.5 335 Z M196 331 L198.5 330.5 L201 332.5 L199 334.5 L196.5 333.5 Z M197.5 338.5 L200 337.5 L201.8 340 L200 342.5 L197.8 341 Z" fill="#1467b3"/>
<!-- temporali cloud -->
<path d="M185.5 380.5 Q182.5 380 183.5 376.5 Q184.5 373.5 187.5 373.8 Q188.5 369.2 193 369.2 Q197.5 369.2 198.5 373.5 Q202.5 373.8 202 377.5 Q201.5 380.5 198.5 380.5 Z" fill="#1467b3"/>
<path d="M190.5 380.5 L189 384 L191 384 L189 388.5 M195.5 380.5 L194 383.5 L196 383.5 L194.5 386.5" fill="none" stroke="#1467b3" stroke-width="1.2" stroke-linejoin="round"/>
<!-- vento -->
<path d="M184.3 428.5 L184.3 415 Q184.3 413.5 186 413" fill="none" stroke="#1467b3" stroke-width="1.5"/>
<path d="M189.5 409.8 Q185 410.3 185 414 Q185 417.7 189.5 418.2 Z" fill="#1467b3"/>
<path d="M189.5 410.2 L201.6 411.4 Q202.8 411.6 202.8 414 Q202.8 416.4 201.6 416.6 L189.5 417.8" fill="none" stroke="#1467b3" stroke-width="1.1"/>
<path d="M193.6 410.6 L193.6 417.4 M197.3 411 L197.3 417" stroke="#1467b3" stroke-width="1.5"/>
<!-- neve -->
<path d="M185.5 462 Q182.5 461.5 183.5 458 Q184.5 455 187.5 455.3 Q188.5 450.7 193 450.7 Q197.5 450.7 198.5 455 Q202.5 455.3 202 459 Q201.5 462 198.5 462 Z" fill="#1467b3"/>
<path d="M190 463 L190 467.5 M188 464.2 L192 466.3 M188 466.3 L192 464.2" stroke="#1467b3" stroke-width="0.9"/>
<circle cx="196.3" cy="466.5" r="1.1" fill="#1467b3"/>
<!-- ghiaccio -->
<path d="M185.5 502.5 Q182.5 502 183.5 498.5 Q184.5 495.5 187.5 495.8 Q188.5 491.2 193 491.2 Q197.5 491.2 198.5 495.5 Q202.5 495.8 202 499.5 Q201.5 502.5 198.5 502.5 Z" fill="#1467b3"/>
<path d="M195 503.5 L195 508.5 M192.8 504.8 L197.2 507.2 M192.8 507.2 L197.2 504.8" stroke="#1467b3" stroke-width="0.9"/>
<path d="M188 504 L187 508 M190.5 504 L189.5 508" stroke="#9cc2e6" stroke-width="0.7"/>
</svg>
<!-- archivio arrow -->
<svg class="a" style="left:1154px;top:132px" width="13" height="12" viewBox="0 0 13 12"><circle cx="6.5" cy="6" r="4.6" fill="none" stroke="#fff" stroke-width="1.6"/><path d="M4 6 L8.5 6 M6.6 4 L8.7 6 L6.6 8" fill="none" stroke="#fff" stroke-width="1.4" stroke-linejoin="round" stroke-linecap="round"/></svg>
<!-- documento allerta ! -->
<svg class="a" style="left:804px;top:218px" width="13" height="13" viewBox="0 0 13 13"><circle cx="6.5" cy="6.5" r="5.2" fill="none" stroke="#1467b3" stroke-width="1.2"/><rect x="5.8" y="3.3" width="1.4" height="4.2" fill="#1467b3"/><rect x="5.8" y="8.5" width="1.4" height="1.4" fill="#1467b3"/></svg>
<!-- umbrella -->
<svg class="a" style="left:150px;top:624px" width="21" height="20" viewBox="150 624 21 20">
<path d="M151 633.5 Q151.5 626.5 160 625.8 Q168.5 626.5 169.3 633.5 Q167.5 632 165.5 633 Q163.5 631.5 160.2 632.5 Q157 631.5 155 633 Q153 632 151 633.5 Z" fill="#083d57"/>
<path d="M160.2 625 L160.2 624.2" stroke="#083d57" stroke-width="1"/>
<path d="M160.2 632.5 L160.2 640.5 Q160.2 642.5 158.3 642.5 Q156.4 642.5 156.4 640.5" fill="none" stroke="#083d57" stroke-width="1.4"/>
</svg>


<!-- bottom -->
<div class="a" style="left:175px;top:627px;font-size:20px;font-weight:700;color:#17364d;transform:scaleX(0.936);transform-origin:0 0">Informati e preparati</div>
<div class="a" style="left:379px;top:636.6px;width:9px;height:2.3px;background:#17364d"></div><div class="a" style="left:382.35px;top:633.5px;width:2.3px;height:8.5px;background:#17364d"></div>
</body></html>
